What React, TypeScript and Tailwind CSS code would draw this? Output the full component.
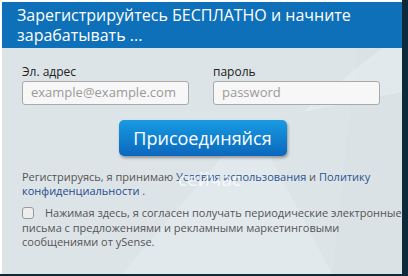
import React from "react";

export default function App() {
  return (
    <div className="w-[408px] h-[276px] bg-[#0e2a3a] flex" style={{ fontFamily: '"Open Sans", "DejaVu Sans", sans-serif' }}>
      <div className="w-[402px] h-[274px] bg-white pt-[2px] pl-[2px]">
        <div className="relative w-[400px] h-[272px] bg-[#dde4e8] flex flex-col overflow-hidden">
          <svg className="absolute inset-0" width="400" height="272" viewBox="0 0 400 272">
            <polygon points="120,272 250,120 330,272" fill="#e4eaee" opacity="0.8" />
            <polygon points="330,272 360,0 400,0 400,272" fill="#d9e1e6" opacity="0.7" />
            <polygon points="300,110 400,30 400,90" fill="#e6ecef" opacity="0.7" />
          </svg>
          <div className="relative h-[46px] bg-[#0e70b8] px-[15px] pt-[3px] text-white text-[16px] leading-[20px]">
            Зарегистрируйтесь БЕСПЛАТНО и начните
            <br />
            зарабатывать ...
          </div>
          <div className="relative flex gap-[24px] pl-[20px] pt-[16px]">
            <div className="flex flex-col">
              <span className="text-[12px] leading-[16px] text-[#222]">Эл. адрес</span>
              <div className="mt-[1px] w-[167px] h-[24px] rounded-[3px] border border-[#a9a9a9] bg-[#f7f7f7] flex items-center px-[8px] text-[13px] text-[#9a9a9a]">
                example@example.com
              </div>
            </div>
            <div className="flex flex-col">
              <span className="text-[12px] leading-[16px] text-[#222]">пароль</span>
              <div className="mt-[1px] w-[167px] h-[24px] rounded-[3px] border border-[#a9a9a9] bg-[#f7f7f7] flex items-center px-[8px] text-[13px] text-[#9a9a9a]">
                password
              </div>
            </div>
          </div>
          <div className="relative flex justify-center mt-[15px] pl-[1px]">
            <div className="w-[168px] h-[36px] rounded-[5px] bg-gradient-to-b from-[#1a9be2] to-[#0c67bd] shadow-[1px_2px_3px_rgba(0,0,0,0.35)] flex items-center justify-center text-white text-[18px]">
              Присоединяйся
            </div>
          </div>
          <div className="relative pl-[20px] mt-[14px] text-[11px] leading-[14px] text-[#555]">
            Регистрируясь, я принимаю <span className="text-[#2a5590]">Условия использования</span> и{" "}
            <span className="text-[#2a5590]">Политику</span>
            <br />
            <span className="text-[#1f4c8c]">конфиденциальности</span> .
            <span className="absolute left-[176px] top-[0px] text-white text-[19px] leading-[19px] opacity-75 blur-[0.6px]">сейчас</span>
          </div>
          <div className="relative pl-[20px] mt-[8px] text-[11px] leading-[14.5px] text-[#555]">
            <span className="inline-block align-[-2px] w-[12px] h-[12px] rounded-[3px] border border-[#999] bg-[#eee] mr-[11px]"></span>
            Нажимая здесь, я согласен получать периодические электронные
            <br />
            письма с предложениями и рекламными маркетинговыми
            <br />
            сообщениями от ySense.
          </div>
        </div>
      </div>
    </div>
  );
}
